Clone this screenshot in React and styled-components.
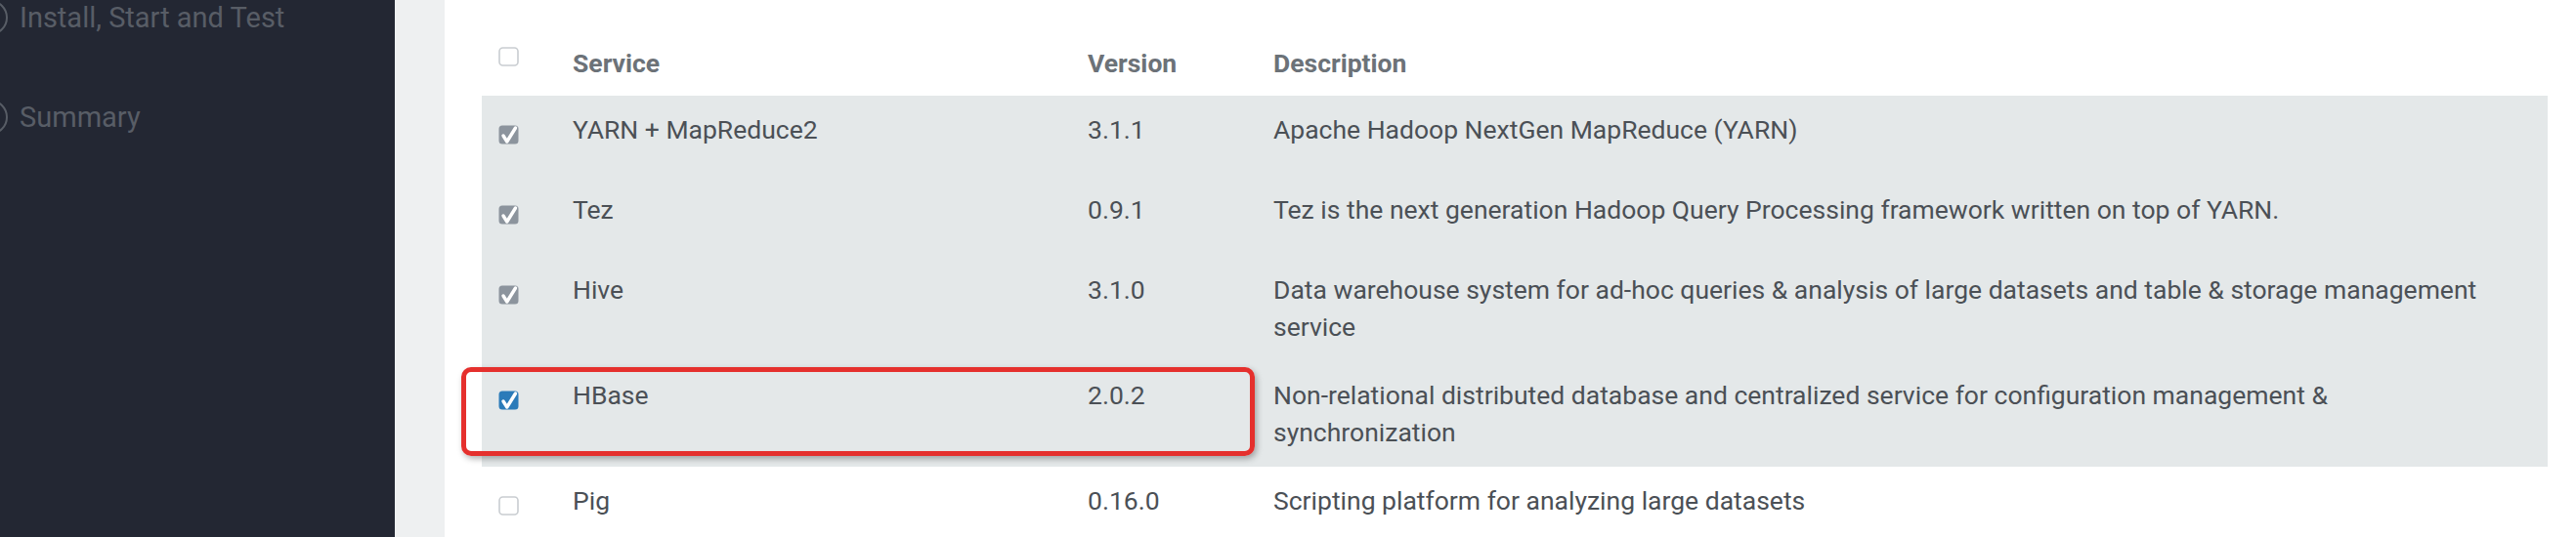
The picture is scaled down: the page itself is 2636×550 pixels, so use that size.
import React from 'react';
import styled, { createGlobalStyle } from 'styled-components';

const GlobalStyle = createGlobalStyle`
	html, body {
		margin: 0;
		padding: 0;
		background: #ffffff;
		overflow: hidden;
	}
	body {
		font-family: Roboto, "Liberation Sans", Arial, sans-serif;
	}
`;

const Page = styled.div`
	display: flex;
	width: 2636px;
	height: 550px;
	overflow: hidden;
`;

const Sidebar = styled.aside`
	width: 404px;
	flex-shrink: 0;
	background: #232733;
	display: flex;
	flex-direction: column;
	overflow: hidden;
`;

const Step = styled.div`
	display: flex;
	align-items: flex-start;
	height: 102px;
	gap: 12px;
	color: #585d66;
	font-size: 29px;
	line-height: 36px;
	white-space: nowrap;
`;

const StepDot = styled.span`
	flex-shrink: 0;
	width: 32px;
	height: 32px;
	margin-left: -28px;
	border: 2px solid #585d66;
	border-radius: 50%;
`;

const Gutter = styled.div`
	width: 51px;
	flex-shrink: 0;
	background: #eef0f1;
`;

const Content = styled.main`
	flex: 1;
	background: #ffffff;
	padding: 26px 29px 0 38px;
`;

const Row = styled.div`
	position: relative;
	display: grid;
	grid-template-columns: 93px 527px 190px 1fr;
	min-height: ${(p) => (p.$head ? '72px' : '82px')};
	background: ${(p) => (p.$shaded ? '#e4e8e9' : 'transparent')};
	color: ${(p) => (p.$head ? '#6c7278' : '#4b5056')};
	font-weight: ${(p) => (p.$head ? 700 : 400)};
	font-size: 26.5px;
	line-height: 38px;
`;

const BoxCell = styled.div`
	padding: ${(p) => (p.$head ? '22px' : '30px')} 0 0 17px;
	svg {
		display: block;
	}
`;

const Cell = styled.div`
	padding: ${(p) => (p.$head ? '20px 30px 14px 0' : '16px 34px 16px 0')};
`;

// red annotation frame drawn over the HBase row
const Highlight = styled.div`
	position: absolute;
	left: -21px;
	top: 6px;
	width: 812px;
	height: 91px;
	box-sizing: border-box;
	border: 5px solid #e5302d;
	border-radius: 10px;
	box-shadow: 2px 3px 6px rgba(0, 0, 0, 0.3);
	pointer-events: none;
`;

const Check = ({ state }) => {
	if (state === 'off') {
		return (
			<svg width="21" height="20" viewBox="0 0 21 20">
				<rect x="1" y="1" width="19" height="18" rx="3.5" fill="#fff" stroke="#c9cdd1" strokeWidth="1.6" />
			</svg>
		);
	}
	const fill = state === 'on' ? '#2b7bb9' : '#8c949d';
	return (
		<svg width="21" height="20" viewBox="0 0 21 20" style={{ overflow: 'visible' }}>
			<rect x="0.5" y="0.5" width="20" height="19" rx="3.5" fill={fill} />
			<path d="M5 11 L8.8 17 L17.5 3" fill="none" stroke="#ffffff" strokeWidth="3.4" strokeLinecap="round" strokeLinejoin="round" />
		</svg>
	);
};

const services = [
	{ name: 'YARN + MapReduce2', version: '3.1.1', desc: 'Apache Hadoop NextGen MapReduce (YARN)', check: 'locked' },
	{ name: 'Tez', version: '0.9.1', desc: 'Tez is the next generation Hadoop Query Processing framework written on top of YARN.', check: 'locked' },
	{ name: 'Hive', version: '3.1.0', desc: 'Data warehouse system for ad-hoc queries & analysis of large datasets and table & storage management service', check: 'locked' },
	{ name: 'HBase', version: '2.0.2', desc: 'Non-relational distributed database and centralized service for configuration management & synchronization', check: 'on', marked: true },
	{ name: 'Pig', version: '0.16.0', desc: 'Scripting platform for analyzing large datasets', check: 'off' },
];

export default function App() {
	return (
		<Page>
			<GlobalStyle />
			<Sidebar>
				<Step>
					<StepDot />
					Install, Start and Test
				</Step>
				<Step>
					<StepDot />
					Summary
				</Step>
			</Sidebar>
			<Gutter />
			<Content>
				<Row $head>
					<BoxCell $head><Check state="off" /></BoxCell>
					<Cell $head>Service</Cell>
					<Cell $head>Version</Cell>
					<Cell $head>Description</Cell>
				</Row>
				{services.map((s) => (
					<Row key={s.name} $shaded={s.check !== 'off'}>
						<BoxCell><Check state={s.check} /></BoxCell>
						<Cell>{s.name}</Cell>
						<Cell>{s.version}</Cell>
						<Cell>{s.desc}</Cell>
						{s.marked && <Highlight />}
					</Row>
				))}
			</Content>
		</Page>
	);
}
